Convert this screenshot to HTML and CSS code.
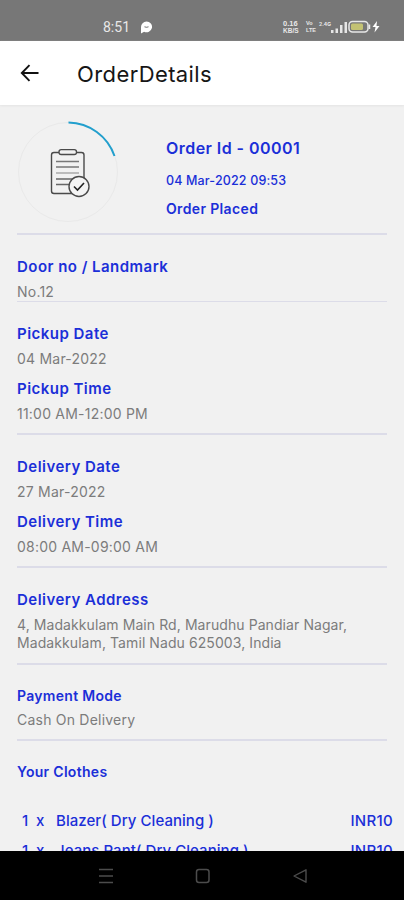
FILE: index.html
```html
<!DOCTYPE html>
<html lang="en">
<head>
    <meta charset="UTF-8">
    <meta name="viewport" content="width=device-width, initial-scale=1.0">
    <title>OrderDetails</title>
    <link rel="stylesheet" href="styles.css">
</head>
<body>
    <div class="screen">
        <div class="statusbar">
            <span class="clock">8:51</span>
            <svg class="chat" width="13" height="13" viewBox="0 0 13 13">
                <path d="M6.5 0.5a5.6 5.4 0 1 1-2.4 10.3L1 12.5V6A5.6 5.5 0 0 1 6.5 0.5z" fill="#fff"/>
                <path d="M4.5 5.5q2 1.8 4 0" stroke="#999" stroke-width="1.2" fill="none"/>
            </svg>
            <div class="speed"><span>0.16</span><span>KB/S</span></div>
            <div class="volte"><span>Vo</span><span>LTE</span></div>
            <div class="network">
                <span>2.4G</span>
                <svg width="22" height="13" viewBox="0 0 22 13" fill="#e6e6e6">
                    <path d="M5 9h2.500v3H5zM9.500 7.500H12V12H9.500zM14 4h2.500v8H14zM18.500 1H21v11h-2.500z"/>
                </svg>
            </div>
            <svg class="battery" width="33" height="14" viewBox="0 0 33 14">
                <rect x="1" y="1.500" width="19" height="10.500" rx="3.500" fill="#777" stroke="#e8e8e8" stroke-width="1.500"/>
                <rect x="3" y="3.500" width="12" height="6.500" rx="1.500" fill="#c3c273"/>
                <path d="M21.500 4.500v4.500" stroke="#e8e8e8" stroke-width="1.500"/>
                <path d="M29 1l-4.500 6h3L26.500 12.500l5-6.500h-3z" fill="#fff"/>
            </svg>
        </div>

        <div class="toolbar">
            <svg class="back" width="20" height="18" viewBox="0 0 20 18">
                <path d="M18.500 9H2M9.500 1.200L1.800 9l7.700 7.800" fill="none" stroke="#111" stroke-width="1.900"/>
            </svg>
            <h1>OrderDetails</h1>
        </div>

        <div class="content">
            <div class="summary">
                <svg class="progress" width="102" height="102" viewBox="0 0 102 102" fill="none">
                    <circle cx="51" cy="51" r="49.500" stroke="#e9e9e9"/>
                    <path d="M51.500 1.500A49.500 49.500 0 0 1 97.500 35" stroke="#229fcd" stroke-width="2"/>
                    <rect x="34.500" y="31.500" width="32.500" height="41" rx="2.500" stroke="#4a4a4a" stroke-width="1.400"/>
                    <rect x="42" y="28.700" width="17.500" height="4.800" rx="2.200" fill="#f1f1f1" stroke="#4a4a4a" stroke-width="1.300"/>
                    <path d="M39 40.500h23M39 46h23" stroke="#777" stroke-width="1.300"/>
                    <path d="M39 52h23" stroke="#bbb" stroke-width="2"/>
                    <path d="M39 58h17M39 63.500h14" stroke="#666" stroke-width="1.300"/>
                    <circle cx="62" cy="65.500" r="10" fill="#f4f4f4" stroke="#4a4a4a" stroke-width="1.400"/>
                    <path d="M57 65.500l3.500 3.500 6.500-7" stroke="#222" stroke-width="1.600"/>
                </svg>
                <div class="summary-text">
                    <p class="order-id">Order Id - 00001</p>
                    <p class="order-date">04 Mar-2022 09:53</p>
                    <p class="order-status">Order Placed</p>
                </div>
            </div>

            <div class="section door">
                <p class="label">Door no / Landmark</p>
                <p class="value">No.12</p>
            </div>

            <div class="section">
                <p class="label">Pickup Date</p>
                <p class="value">04 Mar-2022</p>
                <p class="label">Pickup Time</p>
                <p class="value">11:00 AM-12:00 PM</p>
            </div>

            <div class="section">
                <p class="label">Delivery Date</p>
                <p class="value">27 Mar-2022</p>
                <p class="label">Delivery Time</p>
                <p class="value">08:00 AM-09:00 AM</p>
            </div>

            <div class="section address">
                <p class="label">Delivery Address</p>
                <p class="value">4, Madakkulam Main Rd, Marudhu Pandiar Nagar,<br>Madakkulam, Tamil Nadu 625003, India</p>
            </div>

            <div class="section payment">
                <p class="label">Payment Mode</p>
                <p class="value">Cash On Delivery</p>
            </div>

            <div class="clothes">
                <p class="label">Your Clothes</p>
                <div class="item">
                    <span class="qty">1</span><span class="times">x</span>
                    <span class="name">Blazer( Dry Cleaning )</span>
                    <span class="price">INR10</span>
                </div>
                <div class="item">
                    <span class="qty">1</span><span class="times">x</span>
                    <span class="name">Jeans Pant( Dry Cleaning )</span>
                    <span class="price">INR10</span>
                </div>
            </div>
        </div>

        <div class="navbar">
            <svg width="16" height="16" viewBox="0 0 16 16"><path d="M1 1.500h14M1 8h14M1 14.500h14" stroke="#4c4c4c" stroke-width="1.500"/></svg>
            <svg width="16" height="16" viewBox="0 0 16 16"><rect x="1.500" y="1.500" width="12.500" height="13" rx="2.500" fill="none" stroke="#4c4c4c" stroke-width="1.500"/></svg>
            <svg width="16" height="16" viewBox="0 0 16 16"><path d="M14 1.800v12.400L2 8z" fill="none" stroke="#4c4c4c" stroke-width="1.400" stroke-linejoin="round"/></svg>
        </div>
    </div>
</body>
</html>
```
FILE: styles.css
```css
body,html{
    height: 100%;
    margin: 0;
    font-family: Inter, Roboto, sans-serif;
}
p,h1{
    margin: 0;
    white-space: nowrap;
}
.screen{
    height: 900px;
    display: flex;
    flex-direction: column;
    overflow: hidden;
    background-color: #f1f1f1;
}
.statusbar{
    height: 41px;
    flex: none;
    box-sizing: border-box;
    padding: 13px 0 0 103px;
    display: flex;
    align-items: center;
    background-color: #777;
    color: #e8e8e8;
}
.clock{
    width: 37px;
    font-family: Roboto, sans-serif;
    font-size: 14px;
}
.speed,.volte{
    display: flex;
    flex-direction: column;
    font-size: 6.5px;
    line-height: 7.5px;
    font-weight: bold;
    font-family: "Liberation Sans", sans-serif;
}
.speed{
    width: 23px;
    margin-left: 130px;
}
.speed span:first-child{
    font-size: 7.5px;
}
.volte{
    width: 13px;
    font-size: 5.5px;
    line-height: 7px;
}
.network{
    width: 29px;
    height: 13px;
    display: flex;
}
.network span{
    width: 7px;
    font-size: 5px;
    line-height: 7px;
    font-weight: bold;
}
.toolbar{
    height: 64px;
    flex: none;
    display: flex;
    align-items: center;
    background-color: #fff;
    box-shadow: 0 1px 2px #e4e4e4;
}
.back{
    margin-left: 20px;
}
h1{
    margin: 2px 0 0 37px;
    font-size: 22px;
    font-weight: 400;
    letter-spacing: 0.4px;
    color: #161616;
}
.content{
    flex: 1;
    min-height: 0;
    overflow: hidden;
    padding: 0 17px;
}
.summary{
    height: 128px;
    display: flex;
    border-bottom: 2px solid #dcdce8;
}
.progress{
    margin-top: 16px;
    flex: none;
}
.summary-text{
    margin-left: 47px;
    color: #1b2fd8;
}
.order-id{
    margin-top: 32px;
    font-size: 16px;
    line-height: 22px;
    font-weight: 600;
    letter-spacing: 0.45px;
}
.order-date{
    margin-top: 13px;
    font-size: 12.5px;
    line-height: 18px;
    font-weight: 500;
    letter-spacing: 0.15px;
}
.order-status{
    margin-top: 9px;
    font-size: 14px;
    line-height: 20px;
    font-weight: 600;
    letter-spacing: 0.35px;
}
.section{
    padding: 21px 0 10px;
    border-bottom: 2px solid #dcdce8;
}
.door{
    padding-bottom: 0;
    border-bottom-width: 1px;
}
.label{
    font-size: 15px;
    line-height: 22px;
    font-weight: 600;
    letter-spacing: 0.47px;
    color: #1b2fd8;
}
.value{
    margin-top: 5px;
    font-size: 14px;
    line-height: 18px;
    letter-spacing: 0.22px;
    color: #7c7c7c;
}
.value + .label{
    margin-top: 10px;
}
.address{
    padding-bottom: 11px;
}
.address .value{
    letter-spacing: 0.08px;
}
.payment{
    padding-top: 20px;
}
.payment .value{
    margin-top: 4px;
}
.payment .label,.clothes .label{
    font-size: 14px;
    letter-spacing: 0.3px;
}
.clothes{
    padding-top: 20px;
}
.item{
    height: 30px;
    margin-right: -6px;
    display: flex;
    align-items: center;
    font-size: 15px;
    font-weight: 500;
    letter-spacing: 0.05px;
    color: #1b2fd8;
}
.label + .item{
    margin-top: 22px;
}
.qty{
    width: 14px;
    margin-left: 5px;
}
.times{
    width: 20px;
}
.price{
    margin-left: auto;
    letter-spacing: 0.3px;
}
.navbar{
    height: 49px;
    flex: none;
    display: flex;
    justify-content: center;
    align-items: center;
    gap: 81px;
    padding-left: 1px;
    background-color: #000;
}
```
